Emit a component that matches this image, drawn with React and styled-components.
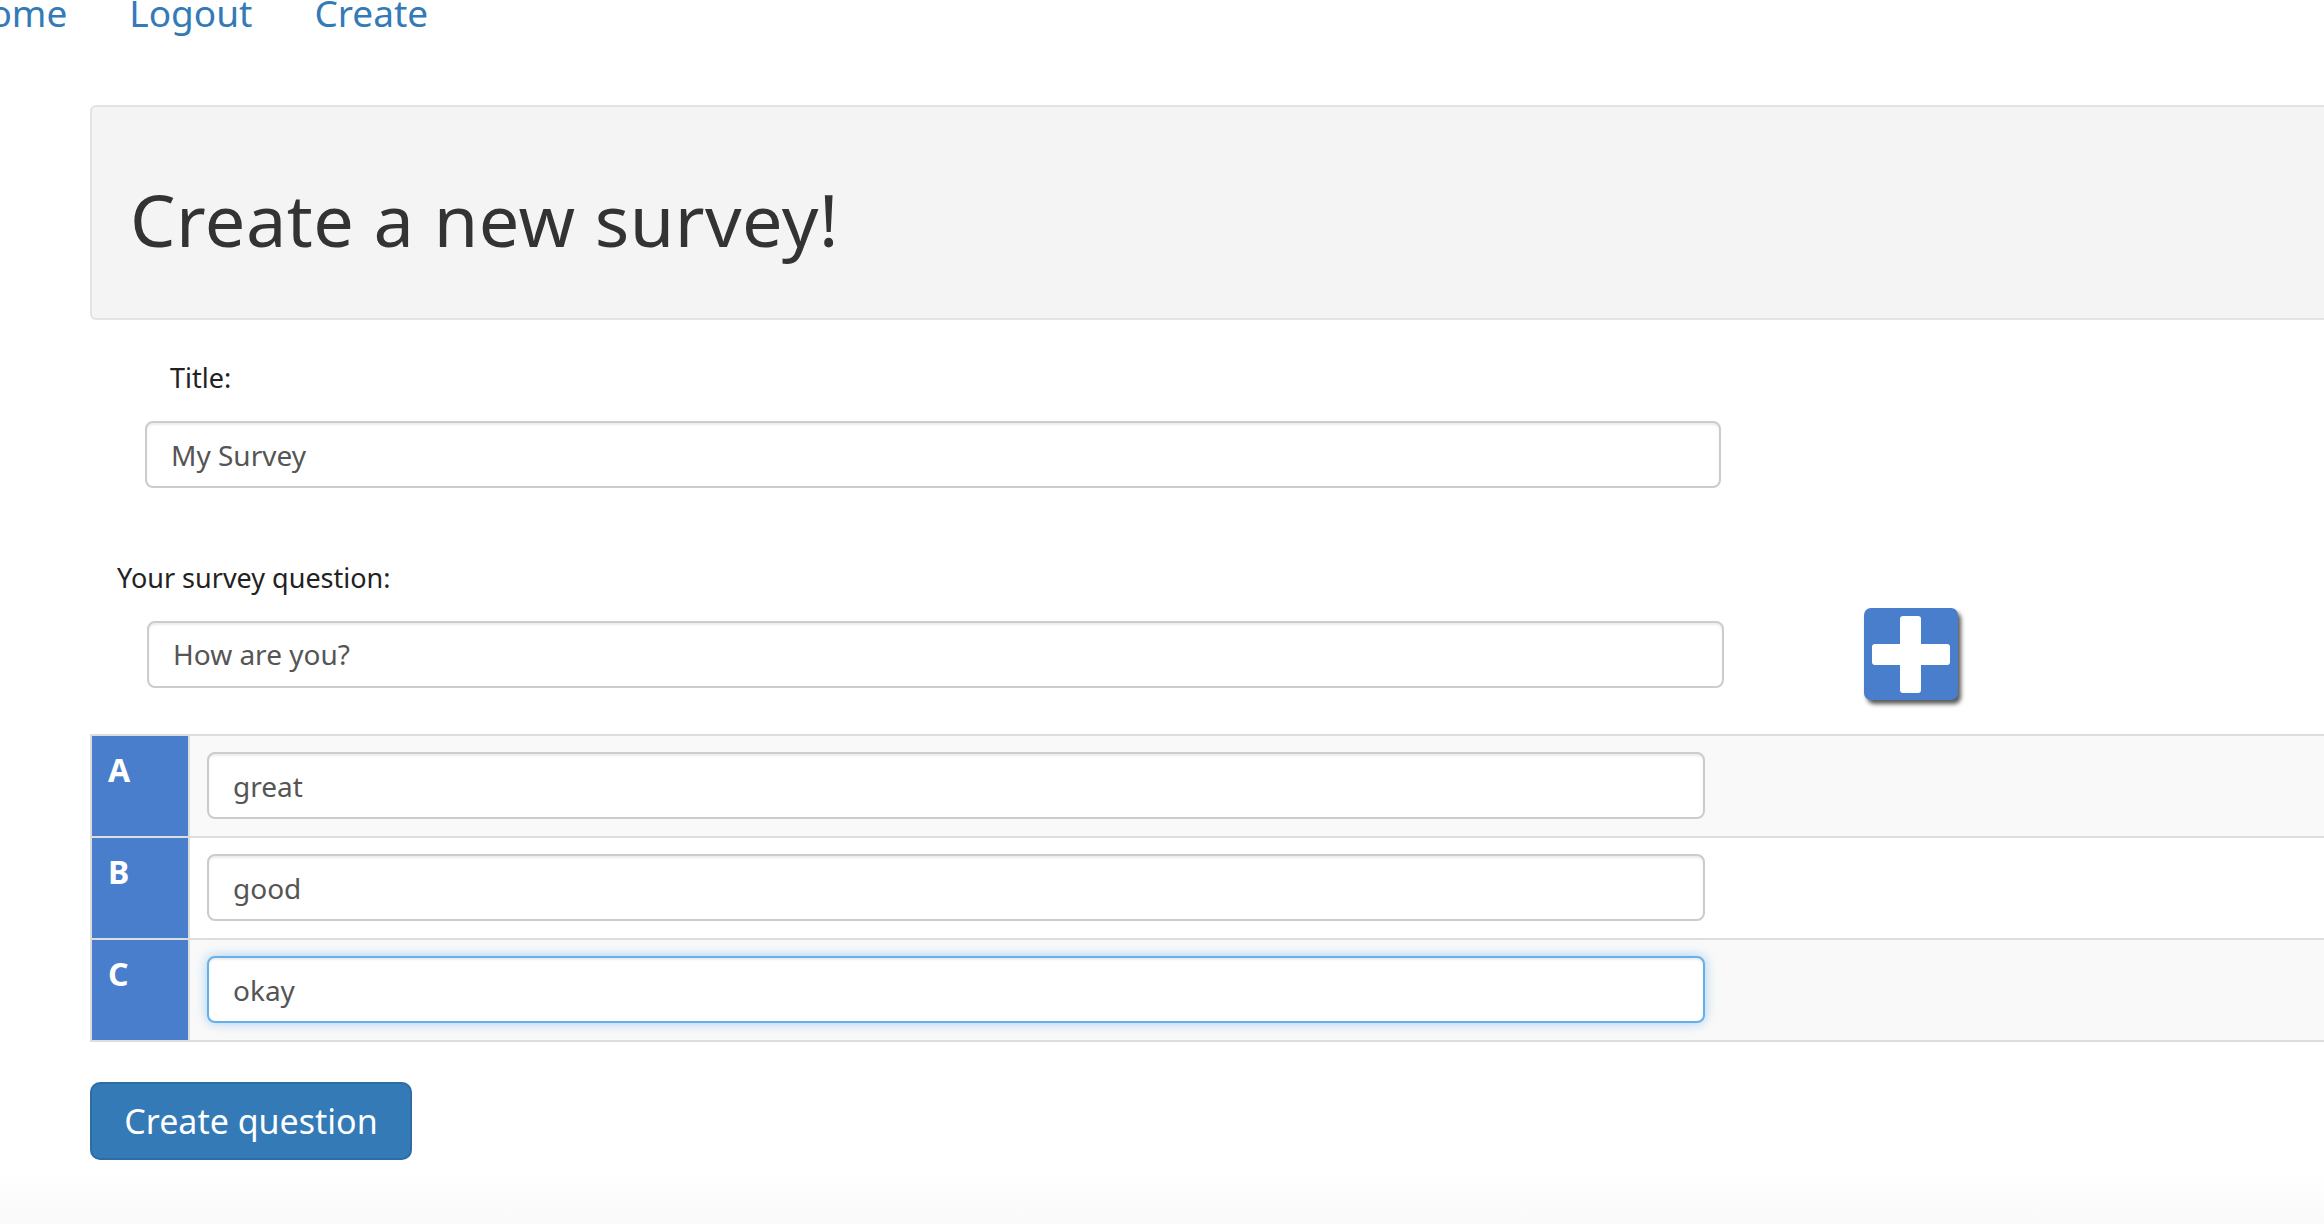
import React from "react";
import styled, { createGlobalStyle } from "styled-components";

const GlobalStyle = createGlobalStyle`
  html, body {
    margin: 0;
    padding: 0;
    background: #ffffff;
    overflow: hidden;
  }
  body {
    font-family: "Noto Sans", "Open Sans", sans-serif;
    color: #333333;
  }
  * {
    box-sizing: border-box;
  }
`;

const Page = styled.div`
  width: 2324px;
  height: 1224px;
  overflow: hidden;
  background: linear-gradient(to bottom, #ffffff 0%, #ffffff 96%, #f9f9f9 100%);
`;

const Nav = styled.nav`
  display: flex;
  gap: 62px;
  margin: -9px 0 0 -38px;
  height: 44px;
  align-items: flex-start;
`;

const NavLink = styled.a`
  font-size: 37px;
  line-height: 44px;
  color: #337ab7;
  text-decoration: none;
`;

const Content = styled.div`
  padding-left: 90px;
`;

const Jumbotron = styled.div`
  margin-top: 70px;
  margin-right: -20px;
  height: 215px;
  display: flex;
  align-items: center;
  padding: 12px 0 0 38px;
  background: #f4f4f4;
  border: 2px solid #e3e3e3;
  border-radius: 6px;
`;

const Heading = styled.h1`
  margin: 0;
  font-size: 72px;
  font-weight: 400;
  color: #333333;
  letter-spacing: 0.5px;
`;

const Label = styled.label`
  display: block;
  font-size: 27px;
  color: #222222;
  margin-left: ${(p) => p.indent}px;
  margin-top: ${(p) => p.top}px;
  line-height: 36px;
`;

const Field = styled.div`
  display: flex;
  align-items: center;
  margin-left: ${(p) => p.indent}px;
  margin-top: ${(p) => p.top}px;
`;

const TextInput = styled.input`
  width: ${(p) => p.w}px;
  height: 67px;
  padding: 0 24px;
  font-family: "Noto Sans", "Open Sans", sans-serif;
  font-size: 28px;
  color: #555555;
  background: #ffffff;
  border: 2px solid ${(p) => (p.focused ? "#66afe9" : "#cccccc")};
  border-radius: 8px;
  box-shadow: ${(p) =>
    p.focused
      ? "inset 0 2px 2px rgba(0,0,0,0.075), 0 0 12px rgba(102,175,233,0.6)"
      : "inset 0 2px 2px rgba(0,0,0,0.075)"};
  outline: none;
`;

const PlusButton = styled.button`
  width: 94px;
  height: 92px;
  margin-left: 140px;
  padding: 0;
  border: none;
  border-radius: 7px;
  background: #487ecb;
  box-shadow: 3px 4px 4px rgba(0, 0, 0, 0.65);
  display: flex;
  align-items: center;
  justify-content: center;
  cursor: pointer;
`;

const OptionsTable = styled.div`
  margin-top: 34px;
  margin-right: -20px;
  border-top: 2px solid #dddddd;
  border-left: 2px solid #dddddd;
`;

const OptionRow = styled.div`
  display: grid;
  grid-template-columns: 98px 1fr;
  height: 102px;
  border-bottom: 2px solid #dddddd;
  background: ${(p) => (p.striped ? "#f9f9f9" : "#ffffff")};
`;

const Letter = styled.div`
  background: #487ecb;
  color: #ffffff;
  font-size: 32px;
  font-weight: 700;
  padding: 14px 0 0 16px;
  line-height: 40px;
  border-right: 2px solid #dddddd;
`;

const OptionCell = styled.div`
  padding: 16px 0 0 17px;
`;

const SubmitButton = styled.button`
  margin-top: 40px;
  width: 322px;
  height: 78px;
  font-family: "Noto Sans", "Open Sans", sans-serif;
  font-size: 34px;
  color: #ffffff;
  background: #337ab7;
  border: 2px solid #2e6da4;
  border-radius: 10px;
  cursor: pointer;
`;

const PlusIcon = () => (
  <svg width="78" height="77" viewBox="0 0 78 77">
    <rect x="28" y="0" width="21" height="77" rx="3" fill="#ffffff" />
    <rect x="0" y="28" width="78" height="21" rx="3" fill="#ffffff" />
  </svg>
);

const options = [
  { letter: "A", value: "great" },
  { letter: "B", value: "good" },
  { letter: "C", value: "okay", focused: true },
];

export default function App() {
  return (
    <Page>
      <GlobalStyle />
      <Nav>
        <NavLink href="#">Home</NavLink>
        <NavLink href="#">Logout</NavLink>
        <NavLink href="#">Create</NavLink>
      </Nav>
      <Content>
        <Jumbotron>
          <Heading>Create a new survey!</Heading>
        </Jumbotron>
        <Label indent={80} top={40}>Title:</Label>
        <Field indent={55} top={25}>
          <TextInput w={1576} defaultValue="My Survey" />
        </Field>
        <Label indent={27} top={72}>Your survey question:</Label>
        <Field indent={57} top={12}>
          <TextInput w={1577} defaultValue="How are you?" />
          <PlusButton aria-label="Add option">
            <PlusIcon />
          </PlusButton>
        </Field>
        <OptionsTable>
          {options.map((o, i) => (
            <OptionRow key={o.letter} striped={i % 2 === 0}>
              <Letter>{o.letter}</Letter>
              <OptionCell>
                <TextInput w={1498} defaultValue={o.value} focused={o.focused} />
              </OptionCell>
            </OptionRow>
          ))}
        </OptionsTable>
        <SubmitButton>Create question</SubmitButton>
      </Content>
    </Page>
  );
}
